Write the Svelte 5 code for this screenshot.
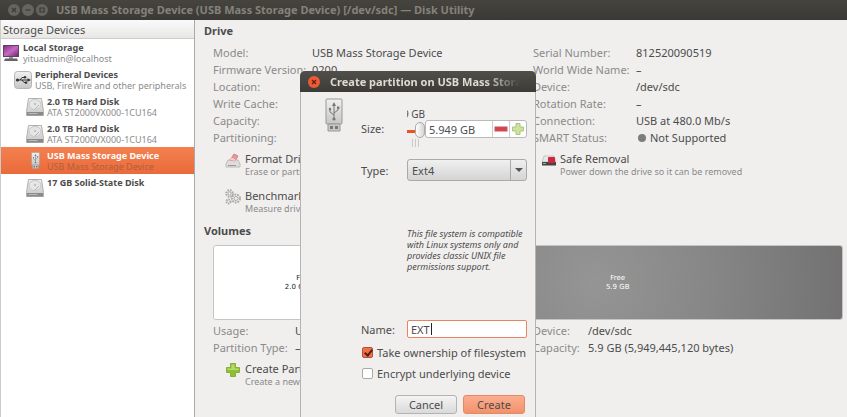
<script>
  const devices = [
    { name: 'Local Storage', detail: 'yituadmin@localhost', icon: 'computer', depth: 0 },
    { name: 'Peripheral Devices', detail: 'USB, FireWire and other peripherals', icon: 'bus', depth: 1 },
    { name: '2.0 TB Hard Disk', detail: 'ATA ST2000VX000-1CU164', icon: 'disk', depth: 2 },
    { name: '2.0 TB Hard Disk', detail: 'ATA ST2000VX000-1CU164', icon: 'disk', depth: 2 },
    { name: 'USB Mass Storage Device', detail: 'USB Mass Storage Device', icon: 'stick', depth: 2, selected: true },
    { name: '17 GB Solid-State Disk', detail: '', icon: 'disk', depth: 2 }
  ];
  const driveLeft = [
    ['Model:', 'USB Mass Storage Device'],
    ['Firmware Version:', '0200'],
    ['Location:', '–'],
    ['Write Cache:', '–'],
    ['Capacity:', '7.9 GB'],
    ['Partitioning:', 'Master Boot Record']
  ];
  const driveRight = [
    ['Serial Number:', '812520090519'],
    ['World Wide Name:', '–'],
    ['Device:', '/dev/sdc'],
    ['Rotation Rate:', '–'],
    ['Connection:', 'USB at 480.0 Mb/s'],
    ['SMART Status:', 'Not Supported']
  ];
  const volumeLeft = [
    ['Usage:', 'Unallocated Space'],
    ['Partition Type:', '–']
  ];
  const volumeRight = [
    ['Device:', '/dev/sdc'],
    ['Capacity:', '5.9 GB (5,949,445,120 bytes)']
  ];

  let size = $state('5.949 GB');
  let sizeValue = $state(100);
  let fsType = $state('Ext4');
  let label = $state('EXT');
  let own = $state(true);
  let encrypt = $state(false);
</script>

{#snippet trident()}
  <g fill="none" stroke="#777" stroke-width="1">
    <path d="M9 21V6M9 17L5 14V11M9 15L13 12V10" />
  </g>
  <path d="M9 4L7 8H11Z" fill="#777" />
  <circle cx="9" cy="21" r="1.6" fill="#777" />
  <circle cx="5" cy="11" r="1.2" fill="#777" />
  <rect x="12" y="8.5" width="2.4" height="2.4" fill="#777" />
{/snippet}

{#snippet stick()}
  <svg viewBox="0 0 18 36" aria-hidden="true">
    <rect x="1" y="1" width="16" height="25" rx="1" fill="url(#steel)" stroke="#999" />
    {@render trident()}
    <path d="M3 26H15V33H3Z" fill="#c8c8c8" stroke="#999" />
    <rect x="5" y="28" width="3" height="3" fill="#777" />
    <rect x="10" y="28" width="3" height="3" fill="#777" />
  </svg>
{/snippet}

{#snippet deviceIcon(kind)}
  {#if kind === 'computer'}
    <svg class="ico-lg" viewBox="0 0 18 18" aria-hidden="true">
      <rect x="1" y="1" width="16" height="12" fill="#5d4560" />
      <rect x="2" y="2" width="14" height="10" fill="url(#screen)" />
      <rect x="7" y="13" width="4" height="2" fill="#999" />
      <path d="M3 14.5H15L16 17H2Z" fill="#666" />
    </svg>
  {:else if kind === 'bus'}
    <svg class="ico-lg" viewBox="0 0 18 18" aria-hidden="true">
      <rect x=".5" y=".5" width="17" height="17" rx="3" fill="url(#steel)" stroke="#b5b5b5" />
      <path d="M3 9H15M6 9L8 6.5H11M8 9L10 11.5H12" fill="none" stroke="#333" />
      <circle cx="3.5" cy="9" r="1.6" fill="#333" />
      <path d="M17 9L13.5 7.3V10.7Z" fill="#333" />
      <circle cx="11" cy="6.3" r="1.2" fill="#333" />
      <rect x="11" y="10.5" width="2.2" height="2.2" fill="#333" />
    </svg>
  {:else if kind === 'disk'}
    <svg class="ico-lg" viewBox="0 0 18 18" aria-hidden="true">
      <path d="M2.5 .5H15.5L17.5 13.5V17.5H.5V13.5Z" fill="url(#steel)" stroke="#b0b0b0" />
      <ellipse cx="9" cy="6.5" rx="6" ry="5" fill="#e6e6e6" stroke="#c8c8c8" />
      <circle cx="9" cy="6" r="1.3" fill="#c4c4c4" />
      <path d="M9 11L13 7" stroke="#b5b5b5" />
      <rect x="1" y="14" width="16" height="3.4" fill="#8a8a8a" />
      <rect x="2.5" y="15" width="9" height="1" fill="#bbb" />
    </svg>
  {:else}
    <span class="ico-stick">{@render stick()}</span>
  {/if}
{/snippet}

{#snippet props(rows)}
  <dl>
    {#each rows as [term, value]}
      <dt>{term}</dt>
      <dd>{#if value === 'Not Supported'}<i class="dot"></i>{/if}{value}</dd>
    {/each}
  </dl>
{/snippet}

<svg class="defs" aria-hidden="true">
  <defs>
    <linearGradient id="steel" x1="0" y1="0" x2="0" y2="1">
      <stop offset="0" stop-color="#f0f0f0" /><stop offset="1" stop-color="#c6c6c6" />
    </linearGradient>
    <linearGradient id="screen" x1="0" y1="0" x2="1" y2="1">
      <stop offset="0" stop-color="#8a2f86" /><stop offset=".5" stop-color="#c56bc4" /><stop offset="1" stop-color="#7a2678" />
    </linearGradient>
  </defs>
</svg>

<div class="window">
  <header class="titlebar">
    <span class="wbuttons">
      <button aria-label="Close window"><svg viewBox="0 0 10 10"><path d="M3 3L7 7M7 3L3 7" /></svg></button>
      <button aria-label="Minimize"><svg viewBox="0 0 10 10"><path d="M2.5 5H7.5" /></svg></button>
      <button aria-label="Maximize"><svg viewBox="0 0 10 10"><path d="M3 3H7V7H3Z" /></svg></button>
    </span>
    <h1>USB Mass Storage Device (USB Mass Storage Device) [/dev/sdc] — Disk Utility</h1>
  </header>

  <div class="body">
    <aside>
      <h2>Storage Devices</h2>
      <ul>
        {#each devices as d}
          <li class="d{d.depth}" class:selected={d.selected}>
            {@render deviceIcon(d.icon)}
            <div>
              <strong>{d.name}</strong>
              <small>{d.detail}</small>
            </div>
          </li>
        {/each}
      </ul>
    </aside>

    <main>
      <h3>Drive</h3>
      <section class="cols drive">
        {@render props(driveLeft)}
        {@render props(driveRight)}
      </section>
      <section class="cols actions">
        <button class="action">
          <svg viewBox="0 0 16 16" aria-hidden="true">
            <path d="M3 8H13L15 12V15H1V12Z" fill="#ddd" stroke="#bbb" />
            <path d="M3 13.5H11" stroke="#999" />
            <path d="M5 8L9 2L13 4L10 9Z" fill="#e79a9a" stroke="#d98080" />
            <path d="M5 8L6.5 5.6L11 8L10 9Z" fill="#f4d0d0" />
          </svg>
          <span>Format Drive<small>Erase or partition the drive</small></span>
        </button>
        <button class="action right">
          <svg viewBox="0 0 16 16" aria-hidden="true">
            <path d="M3 4H13L15 10H1Z" fill="#e6e6e6" stroke="#c5c5c5" />
            <rect x="1" y="10" width="14" height="3.5" fill="#444" />
            <rect x="2" y="11" width="3" height="1" fill="#7fc97f" />
            <rect x="7" y="5" width="7" height="6" rx="1" fill="#d3253c" />
          </svg>
          <span>Safe Removal<small>Power down the drive so it can be removed</small></span>
        </button>
        <button class="action">
          <svg viewBox="0 0 16 16" aria-hidden="true">
            <g fill="none" stroke="#aaa">
              <circle cx="4.5" cy="4.5" r="3.3" stroke-width="2" stroke-dasharray="1.6 1" />
              <circle cx="4.5" cy="4.5" r="1.6" />
              <circle cx="11" cy="9.5" r="4" stroke-width="2" stroke-dasharray="1.8 1" />
              <circle cx="11" cy="9.5" r="2" />
              <circle cx="3.5" cy="12.5" r="2" stroke-width="2" stroke-dasharray="1.3 .8" />
            </g>
          </svg>
          <span>Benchmark<small>Measure drive performance</small></span>
        </button>
      </section>

      <h3>Volumes</h3>
      <div class="volumes">
        <div class="vol used"><span>Free</span><span>2.0 GB FAT</span></div>
        <div class="vol free"><span>Free</span><span>5.9 GB</span></div>
      </div>
      <section class="cols volume">
        {@render props(volumeLeft)}
        {@render props(volumeRight)}
      </section>
      <section class="cols actions">
        <button class="action">
          <svg viewBox="0 0 16 16" aria-hidden="true">
            <path d="M5.5 1.5H10.5V5.5H14.5V10.5H10.5V14.5H5.5V10.5H1.5V5.5H5.5Z" fill="#8fc031" stroke="#86ad45" />
            <path d="M6.5 2.5H9.5V6.5H13.5V8H2.5V6.5H6.5Z" fill="#b5db66" />
          </svg>
          <span>Create Partition<small>Create a new partition</small></span>
        </button>
      </section>
    </main>
  </div>

  <div class="dialog" role="dialog" aria-labelledby="dlg-title">
    <header>
      <button aria-label="Close"><svg viewBox="0 0 12 12"><path d="M4 4L8 8M8 4L4 8" /></svg></button>
      <h2 id="dlg-title">Create partition on USB Mass Storage Device</h2>
    </header>
    <form onsubmit={(e) => e.preventDefault()}>
      <span class="dlg-icon">{@render stick()}</span>
      <div class="fields">
        <label class="size-label" for="size">Size:</label>
        <div class="size">
          <div class="scale">
            <span class="scale-value"><span>5.9 GB</span></span>
            <input type="range" aria-label="Partition size" bind:value={sizeValue} />
            <i class="ticks"></i>
          </div>
          <div class="spin">
            <input id="size" type="text" bind:value={size} />
            <button type="button" aria-label="Decrease"><svg viewBox="0 0 14 14"><rect x="1" y="5" width="12" height="4" fill="#d8424c" stroke="#c9525a" /></svg></button>
            <button type="button" aria-label="Increase"><svg viewBox="0 0 14 14"><path d="M5 1.5H9V5H12.5V9H9V12.5H5V9H1.5V5H5Z" fill="#cfe3a0" stroke="#adc47c" /></svg></button>
          </div>
        </div>

        <label for="type">Type:</label>
        <div class="combo">
          <select id="type" bind:value={fsType}>
            <option>Ext4</option>
            <option>FAT</option>
          </select>
          <i></i>
        </div>

        <p>This file system is compatible with Linux systems only and provides classic UNIX file permissions support.</p>

        <label for="name">Name:</label>
        <div class="name">
          <input id="name" type="text" bind:value={label} />
          <i class="caret"></i>
        </div>
      </div>
      <div class="checks">
        <label><input type="checkbox" bind:checked={own} />Take ownership of filesystem</label>
        <label><input type="checkbox" bind:checked={encrypt} />Encrypt underlying device</label>
      </div>
      <div class="buttons">
        <button type="button">Cancel</button>
        <button type="submit" class="primary">Create</button>
      </div>
    </form>
  </div>
</div>

<style>
  :global(body) { margin: 0; background: #f0efee; }
  * { box-sizing: border-box; }
  .window {
    position: relative;
    display: flex;
    flex-direction: column;
    min-height: 100vh;
    overflow: hidden;
    background: #f0efee;
    color: #4c4c4c;
    font-family: "Noto Sans", "Open Sans", sans-serif;
    font-size: 11px;
    line-height: 17px;
    white-space: nowrap;
  }
  .defs { position: absolute; width: 0; height: 0; }
  h1, h2, h3, ul, dl, dd, p { margin: 0; padding: 0; }
  button, input, select { font: inherit; color: inherit; margin: 0; padding: 0; }
  button { border: 0; background: none; }
  svg { display: block; }

  .titlebar {
    display: flex;
    align-items: center;
    gap: 8px;
    height: 20px;
    padding-left: 8px;
    background: linear-gradient(#45443f, #3a3935);
    color: #85827a;
  }
  .titlebar h1 { font-size: 11px; font-weight: 700; line-height: 20px; }
  .wbuttons { display: flex; gap: 2px; }
  .wbuttons button { width: 12px; height: 12px; padding: 1px; border-radius: 50%; background: #66645e; }
  .wbuttons path { fill: none; stroke: #3a3935; stroke-width: 1.2; }

  .body { display: flex; flex: 1; }
  aside { flex: none; width: 195px; background: #fff; border-right: 1px solid #aaa; border-left: 1px solid #ccc; }
  aside h2 {
    height: 19px;
    padding-left: 2px;
    border-bottom: 1px solid #ccc;
    background: linear-gradient(#fafafa, #e8e7e6);
    font-size: 11px;
    font-weight: 400;
    line-height: 20px;
  }
  ul { list-style: none; }
  li { display: flex; gap: 3px; height: 27px; padding: 3px 0 2px 1px; line-height: 11px; }
  li div { display: flex; flex-direction: column; }
  li strong { font-size: 9px; }
  li small { font-size: 9px; color: #8c8c8c; }
  .d1 { padding-left: 13px; }
  .d2 { padding-left: 25px; }
  .selected { background: linear-gradient(#f4804f, #ea6a3a); color: #fff; }
  .selected small { color: #b0603f; }
  .ico-lg { flex: none; width: 18px; height: 18px; margin-top: 2px; }
  .ico-stick { flex: none; width: 18px; height: 18px; margin-top: 2px; padding: 0 5px; }
  .ico-stick svg { width: 9px; height: 18px; }

  main { flex: 1; padding: 2px 4px 0 9px; }
  h3 { font-size: 11px; font-weight: 700; line-height: 17px; }
  .cols { display: grid; grid-template-columns: 1fr 1fr; column-gap: 10px; margin-left: 9px; }
  dl { display: grid; grid-template-columns: 99px 1fr; align-content: start; }
  .drive { margin-top: 5px; }
  .drive dl + dl { grid-template-columns: 103px 1fr; }
  .volume { margin-top: 2px; }
  .volume dl { grid-template-columns: 82px 1fr; }
  .volume dl + dl { grid-template-columns: 55px 1fr; }
  dt { color: #8a8a8a; }
  .dot { display: inline-block; width: 8px; height: 8px; margin: 0 4px 0 2px; border-radius: 50%; background: #7d7d7d; }
  .actions { margin-top: 5px; row-gap: 11px; }
  .action { display: flex; gap: 4px; padding: 0 0 0 12px; text-align: left; line-height: 15px; }
  .action.right { padding-left: 8px; gap: 3px; }
  .action svg { width: 16px; height: 16px; margin-top: 1px; }
  .action small { display: block; color: #8a8a8a; font-size: 9px; line-height: 11px; }
  .actions + h3 { margin-top: 8px; }
  .volumes { display: flex; height: 75px; margin: 6px 0 0 9px; border: 1px solid #c4c4c4; border-radius: 3px; overflow: hidden; }
  .vol {
    display: flex;
    flex-direction: column;
    align-items: center;
    justify-content: center;
    font: 7px/9px "DejaVu Sans", sans-serif;
  }
  .used { flex: 2; background: #fff; color: #222; }
  .free { flex: 5; background: radial-gradient(circle at 45% 50%, #959595, #878787 45%, #727272); color: #fff; }

  .dialog {
    position: absolute;
    top: 71px;
    bottom: 0;
    left: 300px;
    width: 236px;
    border: solid #b5b4b2;
    border-width: 0 1px;
    border-radius: 5px 5px 0 0;
    background: #f0efee;
  }
  .dialog header {
    display: flex;
    align-items: center;
    gap: 10px;
    height: 21px;
    margin: 0 -1px;
    padding: 0 16px 0 8px;
    border-radius: 5px 5px 0 0;
    background: linear-gradient(#504f49, #3c3b37);
    color: #dfdbd2;
  }
  .dialog header button { flex: none; width: 12px; height: 12px; border-radius: 50%; background: #ee5a35; }
  .dialog header path { stroke: #5a2010; stroke-width: 1.2; }
  .dialog h2 {
    flex: 1;
    overflow: hidden;
    font-size: 11px;
    font-weight: 700;
    mask-image: linear-gradient(90deg, #000 82%, transparent);
  }
  form { display: grid; grid-template-columns: 36px minmax(0, 1fr); padding: 6px 8px 0 24px; }
  .dlg-icon { width: 18px; }
  .dlg-icon svg { width: 18px; height: 36px; }
  .fields { display: grid; grid-template-columns: 46px minmax(0, 1fr); align-items: center; }
  .size-label { align-self: start; padding-top: 22px; }
  .size { display: flex; align-items: flex-start; padding-top: 10px; height: 61px; }
  .scale { flex: none; width: 18px; }
  .scale-value { display: flex; justify-content: flex-end; width: 18px; height: 13px; overflow: hidden; line-height: 13px; font-size: 10px; }
  .scale input { display: block; appearance: none; width: 18px; height: 18px; background: linear-gradient(#e95420, #e95420) 0 9px / 12px 3px no-repeat; }
  .scale input::-webkit-slider-thumb { appearance: none; width: 10px; height: 16px; border: 1px solid #aaa; border-radius: 5px; background: linear-gradient(90deg, #fff, #d5d5d5); }
  .ticks { display: block; width: 9px; height: 8px; margin-left: 5px; background: repeating-linear-gradient(90deg, #c8c8c8 0 1px, transparent 1px 3px); }
  .spin { display: flex; flex: 1; min-width: 0; height: 18px; margin-top: 12px; border: 1px solid #b9b9b9; border-radius: 3px; background: #fff; }
  .spin input { flex: 1; min-width: 0; padding-left: 3px; border: 0; background: none; }
  .spin button { flex: none; width: 17px; padding: 1px; border-left: 1px solid #ccc; }
  .combo { position: relative; height: 22px; }
  .combo select { appearance: none; width: 100%; height: 22px; padding: 0 4px; border: 1px solid #aaa; border-radius: 3px; background: linear-gradient(#f0f0f0, #d4d4d4); }
  .combo i { position: absolute; top: 1px; right: 0; width: 17px; height: 20px; border-left: 1px solid #aaa; pointer-events: none; }
  .combo i::after { content: ""; position: absolute; top: 8px; left: 4px; border: 4px solid transparent; border-top-color: #555; border-bottom: 0; }
  p { grid-column: 2; padding: 47px 0 48px; white-space: normal; font-size: 9px; font-style: italic; line-height: 11px; }
  .name { position: relative; }
  .name input { display: block; width: 100%; height: 18px; padding-left: 3px; border: 1px solid #e8855f; border-radius: 2px; background: #fff; outline: none; }
  .caret { position: absolute; top: 3px; left: 24px; width: 1px; height: 12px; background: #222; }
  .checks { grid-column: 2; display: grid; gap: 4px; margin-top: 6px; }
  .checks label { display: flex; align-items: center; gap: 4px; }
  .checks input { appearance: none; flex: none; width: 11px; height: 11px; margin-left: 1px; border: 1px solid #aaa; border-radius: 2px; background: #fff; }
  .checks input:checked { border-color: #b5533a; background: #ef7048; position: relative; }
  .checks input:checked::after { content: ""; position: absolute; top: 0; left: 3px; width: 3px; height: 6px; border: solid #54200f; border-width: 0 2px 2px 0; transform: rotate(40deg); }
  .buttons { grid-column: 1 / -1; display: flex; justify-content: flex-end; gap: 6px; padding: 13px 2px 0 0; }
  .buttons button { width: 62px; height: 19px; border: 1px solid #b3b3b3; border-radius: 3px; background: linear-gradient(#f4f4f4, #dadada); }
  .buttons .primary { border-color: #e08a68; background: linear-gradient(#fbae90, #f3916b); }
</style>
